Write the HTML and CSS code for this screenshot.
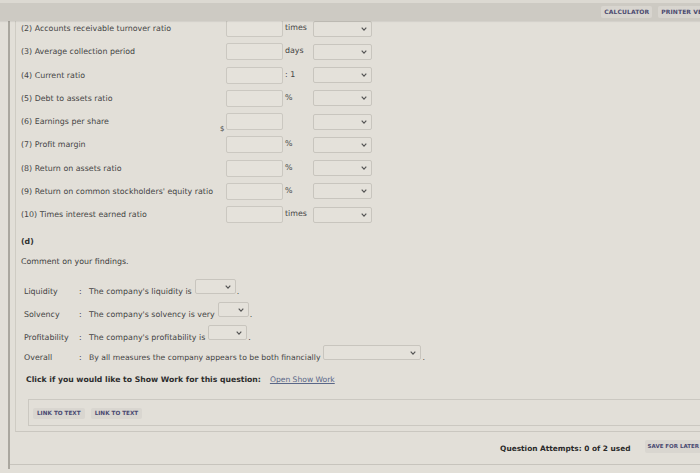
FILE: index.html
```html
<!DOCTYPE html>
<html>
<head>
<meta charset="utf-8">
<title>Ratios</title>
<link rel="stylesheet" href="styles.css">
</head>
<body>
<div class="page">
  <div class="topstrip"></div>
  <div class="toolbar">
    <span class="tbtn">CALCULATOR</span>
    <span class="tbtn">PRINTER VERSION</span>
  </div>
  <div class="frame">
    <div class="panel">
      <div class="ratios">
        <div class="row"><span class="lbl">(2) Accounts receivable turnover ratio</span><span class="pre"></span><span class="inp"></span><span class="unit">times</span><span class="sel"><svg width="6" height="4" viewBox="0 0 6 4"><path d="M0.7 0.7 L3 3.1 L5.3 0.7" fill="none" stroke="#555" stroke-width="1.2"/></svg></span></div>
        <div class="row"><span class="lbl">(3) Average collection period</span><span class="pre"></span><span class="inp"></span><span class="unit">days</span><span class="sel"><svg width="6" height="4" viewBox="0 0 6 4"><path d="M0.7 0.7 L3 3.1 L5.3 0.7" fill="none" stroke="#555" stroke-width="1.2"/></svg></span></div>
        <div class="row"><span class="lbl">(4) Current ratio</span><span class="pre"></span><span class="inp"></span><span class="unit">: 1</span><span class="sel"><svg width="6" height="4" viewBox="0 0 6 4"><path d="M0.7 0.7 L3 3.1 L5.3 0.7" fill="none" stroke="#555" stroke-width="1.2"/></svg></span></div>
        <div class="row"><span class="lbl">(5) Debt to assets ratio</span><span class="pre"></span><span class="inp"></span><span class="unit">%</span><span class="sel"><svg width="6" height="4" viewBox="0 0 6 4"><path d="M0.7 0.7 L3 3.1 L5.3 0.7" fill="none" stroke="#555" stroke-width="1.2"/></svg></span></div>
        <div class="row"><span class="lbl">(6) Earnings per share</span><span class="pre">$</span><span class="inp"></span><span class="unit"></span><span class="sel"><svg width="6" height="4" viewBox="0 0 6 4"><path d="M0.7 0.7 L3 3.1 L5.3 0.7" fill="none" stroke="#555" stroke-width="1.2"/></svg></span></div>
        <div class="row"><span class="lbl">(7) Profit margin</span><span class="pre"></span><span class="inp"></span><span class="unit">%</span><span class="sel"><svg width="6" height="4" viewBox="0 0 6 4"><path d="M0.7 0.7 L3 3.1 L5.3 0.7" fill="none" stroke="#555" stroke-width="1.2"/></svg></span></div>
        <div class="row"><span class="lbl">(8) Return on assets ratio</span><span class="pre"></span><span class="inp"></span><span class="unit">%</span><span class="sel"><svg width="6" height="4" viewBox="0 0 6 4"><path d="M0.7 0.7 L3 3.1 L5.3 0.7" fill="none" stroke="#555" stroke-width="1.2"/></svg></span></div>
        <div class="row"><span class="lbl">(9) Return on common stockholders' equity ratio</span><span class="pre"></span><span class="inp"></span><span class="unit">%</span><span class="sel"><svg width="6" height="4" viewBox="0 0 6 4"><path d="M0.7 0.7 L3 3.1 L5.3 0.7" fill="none" stroke="#555" stroke-width="1.2"/></svg></span></div>
        <div class="row"><span class="lbl">(10) Times interest earned ratio</span><span class="pre"></span><span class="inp"></span><span class="unit">times</span><span class="sel"><svg width="6" height="4" viewBox="0 0 6 4"><path d="M0.7 0.7 L3 3.1 L5.3 0.7" fill="none" stroke="#555" stroke-width="1.2"/></svg></span></div>
      </div>

      <div class="parthead">(d)</div>
      <div class="comment">Comment on your findings.</div>

      <div class="crow first"><span class="clbl">Liquidity</span><span class="colon">:</span><span class="ctext">The company's liquidity is</span><span class="csel w40"><svg width="6" height="4" viewBox="0 0 6 4"><path d="M0.7 0.7 L3 3.1 L5.3 0.7" fill="none" stroke="#555" stroke-width="1.2"/></svg></span><span class="ctext">.</span></div>
      <div class="crow"><span class="clbl">Solvency</span><span class="colon">:</span><span class="ctext">The company's solvency is very</span><span class="csel w30"><svg width="6" height="4" viewBox="0 0 6 4"><path d="M0.7 0.7 L3 3.1 L5.3 0.7" fill="none" stroke="#555" stroke-width="1.2"/></svg></span><span class="ctext">.</span></div>
      <div class="crow"><span class="clbl">Profitability</span><span class="colon">:</span><span class="ctext">The company's profitability is</span><span class="csel w39"><svg width="6" height="4" viewBox="0 0 6 4"><path d="M0.7 0.7 L3 3.1 L5.3 0.7" fill="none" stroke="#555" stroke-width="1.2"/></svg></span><span class="ctext">.</span></div>
      <div class="crow last"><span class="clbl">Overall</span><span class="colon">:</span><span class="ctext small">By all measures the company appears to be both financially</span><span class="csel w98"><svg width="6" height="4" viewBox="0 0 6 4"><path d="M0.7 0.7 L3 3.1 L5.3 0.7" fill="none" stroke="#555" stroke-width="1.2"/></svg></span><span class="ctext">.</span></div>

      <div class="showwork"><b>Click if you would like to Show Work for this question:</b><a class="swlink" href="#">Open Show Work</a></div>

      <div class="linkbox">
        <span class="lbtn">LINK TO TEXT</span>
        <span class="lbtn">LINK TO TEXT</span>
      </div>
    </div>
    <div class="attempts">
      <span class="att">Question Attempts: 0 of 2 used</span>
      <span class="sbtn">SAVE FOR LATER</span>
    </div>
  </div>
</div>
</body>
</html>
```

FILE: styles.css
```css
html, body {
  margin: 0;
  padding: 0;
  background: #e2dfd8;
  overflow: hidden;
}
body {
  font-family: "DejaVu Sans", Verdana, sans-serif;
  font-size: 7.9px;
  color: #454545;
}
.page {
  width: 760px;
  height: 473px;
}
.topstrip {
  height: 3px;
  background: #dcd9d2;
}
.toolbar {
  position: relative;
  z-index: 2;
  height: 18px;
  background: #cdcac3;
  box-shadow: 0 1px 1px rgba(0,0,0,0.06);
  display: flex;
  justify-content: flex-end;
  align-items: center;
  gap: 6px;
  padding-right: 33px;
}
.tbtn {
  background: #d8d5cf;
  border-radius: 2px;
  padding: 2px 3px;
  height: 8px;
  line-height: 8px;
  font-size: 6px;
  font-weight: bold;
  color: #4b4a70;
  letter-spacing: 0.1px;
}
.frame {
  margin-left: 8px;
  border-left: 2px solid #aaa79f;
  height: 452px;
}
.panel {
  margin-left: 5px;
  border-left: 1px solid #cfccc4;
  border-bottom: 1px solid #cac7c0;
  padding-left: 5px;
  padding-bottom: 5px;
}
.ratios {
  margin-top: -4px;
}
.row {
  display: grid;
  grid-template-columns: 199px 6px 57px 30px 59px;
  align-items: center;
  height: 23.25px;
}
.lbl {
  white-space: nowrap;
}
.pre {
  align-self: end;
  padding-bottom: 0;
  font-size: 7px;
}
.inp {
  height: 17px;
  box-sizing: border-box;
  border: 1px solid #cbc8c1;
  border-radius: 2px;
  background: #e5e2db;
}
.unit {
  padding-left: 2px;
  padding-bottom: 2px;
}
.sel, .csel {
  height: 16px;
  box-sizing: border-box;
  border: 1px solid #c8c5be;
  border-radius: 2px;
  background: #e4e1da;
  display: flex;
  align-items: center;
  justify-content: flex-end;
  padding-right: 4px;
}
.parthead {
  margin-top: 11px;
  line-height: 10px;
  height: 10px;
  font-weight: bold;
  color: #333;
  font-size: 7.8px;
}
.comment {
  margin-top: 10px;
  line-height: 10px;
  height: 10px;
  font-size: 7.9px;
  color: #3e3e3e;
}
.crow {
  display: flex;
  align-items: flex-end;
  height: 23px;
  padding-left: 3px;
}
.crow.first {
  height: 30px;
}
.crow.last {
  height: 20px;
}
.clbl {
  width: 55px;
  line-height: 10px;
}
.colon {
  width: 10px;
  line-height: 10px;
}
.ctext {
  line-height: 10px;
  white-space: nowrap;
}
.ctext.small {
  font-size: 7.7px;
}
.csel {
  margin: 0 1px 3px 3px;
  height: 15px;
}
.w40 { width: 41px; }
.w30 { width: 31px; }
.w39 { width: 39px; }
.w98 { width: 98px; }
.showwork {
  margin-top: 12px;
  line-height: 10px;
  height: 10px;
  padding-left: 5px;
  white-space: nowrap;
}
.showwork b {
  color: #2d2d2d;
  font-size: 7.7px;
}
.swlink {
  margin-left: 9px;
  font-size: 7.6px;
  color: #5a6788;
  text-decoration: underline;
}
.linkbox {
  margin-top: 14px;
  margin-left: 7px;
  height: 27px;
  box-sizing: border-box;
  border: 1px solid #cbc8c1;
  border-right: none;
  display: flex;
  align-items: flex-start;
  gap: 6px;
  padding: 8px 0 0 4px;
}
.lbtn {
  background: #d9d6d0;
  border-radius: 2px;
  height: 11px;
  line-height: 11px;
  padding: 0 4px;
  font-size: 5.7px;
  font-weight: bold;
  color: #4a4a72;
}
.attempts {
  height: 32px;
  border-bottom: 1px solid #c7c4bd;
  display: flex;
  justify-content: flex-end;
  align-items: center;
  gap: 14px;
  padding-right: 58px;
}
.att {
  font-weight: bold;
  font-size: 7.4px;
  color: #2a2a2a;
}
.sbtn {
  background: #d9d6d0;
  border-radius: 2px;
  height: 13px;
  line-height: 13px;
  padding: 0 3px;
  font-size: 5.5px;
  font-weight: bold;
  color: #4a4a72;
  margin-top: -4px;
}
```
